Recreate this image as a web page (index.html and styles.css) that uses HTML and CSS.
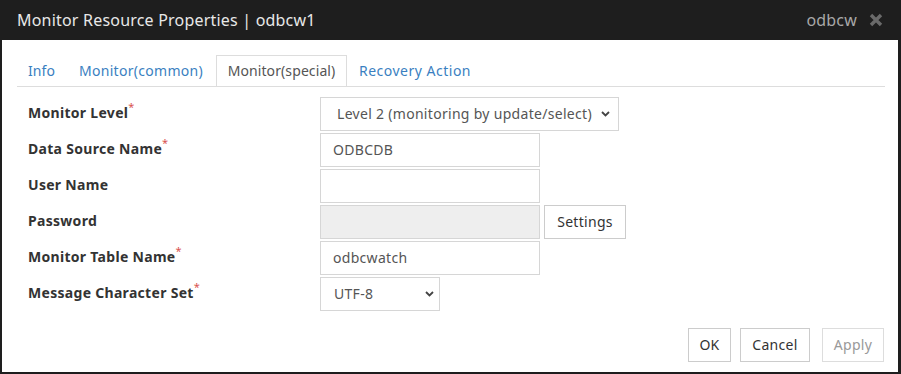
FILE: index.html
```html
<!DOCTYPE html>
<html>
<head>
<meta charset="utf-8">
<link rel="stylesheet" href="styles.css">
</head>
<body>
<div class="dialog">
  <div class="titlebar">
    <span class="title">Monitor Resource Properties | odbcw1</span>
    <span class="title-right">
      <span class="type">odbcw</span>
      <svg class="close" width="14" height="14" viewBox="0 0 14 14"><path d="M2 2 L12 12 M12 2 L2 12" stroke="#6a6a6a" stroke-width="3.4" stroke-linecap="butt"/></svg>
    </span>
  </div>
  <div class="body">
    <div class="tabs">
      <span class="tab t-info">Info</span>
      <span class="tab t-common">Monitor(common)</span>
      <span class="tab t-special active">Monitor(special)</span>
      <span class="tab t-recovery">Recovery Action</span>
    </div>
    <div class="form">
      <label class="lbl">Monitor Level<sup>*</sup></label>
      <div class="ctrl"><div class="select wide"><span>Level 2 (monitoring by update/select)</span><svg class="chev" width="9" height="6" viewBox="0 0 9 6"><path d="M1 1 L4.5 4.5 L8 1" fill="none" stroke="#444" stroke-width="1.8"/></svg></div></div>

      <label class="lbl">Data Source Name<sup>*</sup></label>
      <div class="ctrl"><div class="input">ODBCDB</div></div>

      <label class="lbl">User Name</label>
      <div class="ctrl"><div class="input"></div></div>

      <label class="lbl">Password</label>
      <div class="ctrl"><div class="input disabled"></div><div class="btn settings">Settings</div></div>

      <label class="lbl">Monitor Table Name<sup>*</sup></label>
      <div class="ctrl"><div class="input">odbcwatch</div></div>

      <label class="lbl">Message Character Set<sup>*</sup></label>
      <div class="ctrl"><div class="select narrow"><span>UTF-8</span><svg class="chev" width="9" height="6" viewBox="0 0 9 6"><path d="M1 1 L4.5 4.5 L8 1" fill="none" stroke="#444" stroke-width="1.8"/></svg></div></div>
    </div>
    <div class="footer">
      <div class="btn ok">OK</div>
      <div class="btn cancel">Cancel</div>
      <div class="btn apply">Apply</div>
    </div>
  </div>
</div>
</body>
</html>
```
FILE: styles.css
```css
html, body {
  margin: 0;
  padding: 0;
  background: #1e1e1e;
}
body {
  width: 901px;
  height: 374px;
  overflow: hidden;
  font-family: "Noto Sans", "Open Sans", sans-serif;
  letter-spacing: 0.3px;
}
.dialog {
  display: flex;
  flex-direction: column;
  height: 374px;
}
.titlebar {
  height: 40px;
  display: flex;
  align-items: center;
  justify-content: space-between;
  padding: 0 18px 0 17px;
  color: #e8e8e8;
  font-size: 16px;
  letter-spacing: 0.2px;
}
.title-right {
  display: flex;
  align-items: center;
  gap: 12px;
}
.type {
  color: #a8a8a8;
  font-size: 16px;
}
.close { display: block; }
.body {
  background: #fff;
  margin: 0 3px 2px 2px;
  height: 332px;
  display: flex;
  flex-direction: column;
  padding: 15px 13px 10px 15px;
  box-sizing: border-box;
}
.tabs {
  display: flex;
  border-bottom: 1px solid #ddd;
  height: 31px;
}
.tab {
  font-size: 14px;
  color: #3a7fc1;
  line-height: 30px;
  margin-right: 2px;
  border: 1px solid transparent;
  border-bottom: none;
  box-sizing: border-box;
  text-align: center;
  letter-spacing: 0.1px;
}
.t-info { width: 49px; }
.t-common { width: 146px; letter-spacing: 0.3px; }
.t-special { width: 131px; }
.t-recovery { width: 132px; letter-spacing: 0.5px; }
.tab.active {
  color: #555;
  border-color: #ddd;
  background: #fff;
  height: 31px;
  margin-bottom: -1px;
}
.form {
  display: grid;
  grid-template-columns: 292px 1fr;
  row-gap: 2px;
  margin-top: 10px;
  padding-left: 11px;
}
.lbl {
  font-weight: bold;
  font-size: 14px;
  color: #333;
  height: 34px;
  line-height: 32px;
}
.lbl sup {
  color: #d9534f;
  font-size: 11px;
  font-weight: normal;
  vertical-align: 7px;
  line-height: 0;
}
.ctrl {
  display: flex;
  gap: 4px;
  height: 34px;
}
.input, .select {
  border: 1px solid #d6d6d6;
  box-sizing: border-box;
  height: 34px;
  font-size: 14px;
  color: #555;
  padding: 0 12px;
  line-height: 32px;
  width: 220px;
  background: #fff;
}
.input.disabled {
  background: #eee;
}
.select {
  display: flex;
  align-items: center;
  justify-content: space-between;
  padding: 0 8px 0 16px;
}
.select.wide { width: 299px; }
.select.narrow { width: 120px; padding-left: 13px; padding-right: 5px; }
.chev { display: block; }
.btn {
  border: 1px solid #ccc;
  box-sizing: border-box;
  height: 34px;
  font-size: 14px;
  color: #333;
  line-height: 32px;
  text-align: center;
  background: #fff;
}
.settings { width: 82px; }
.footer {
  margin-top: auto;
  display: flex;
  justify-content: flex-end;
  gap: 9px;
  padding-right: 1px;
}
.ok { width: 43px; }
.cancel { width: 70px; margin-right: 3px; }
.apply { width: 62px; color: #999; border-color: #ddd; }
```
